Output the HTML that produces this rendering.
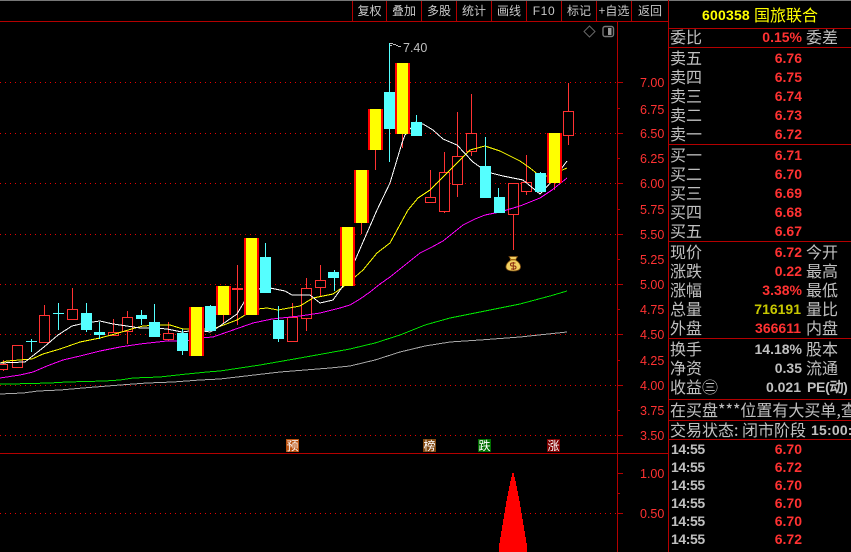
<!DOCTYPE html>
<html lang="zh"><head><meta charset="utf-8"><title>600358</title>
<style>
html,body{margin:0;padding:0;background:#000;width:851px;height:552px;overflow:hidden}
#a{position:relative;width:851px;height:552px;overflow:hidden;background:#000}
svg{position:absolute;left:0;top:0}
.c,.n,.r,.y,.ax,.tb,.bd{position:absolute;white-space:pre;line-height:16px;height:16px}
.c{font:16px/16px "WenQuanYi Zen Hei","Noto Sans CJK SC",sans-serif;color:#c0c0c0;transform:translateY(-1px)}
.n{font:bold 14px/16px "Liberation Sans",sans-serif;color:#ff3232;text-align:right;right:49px}
.g{color:#c0c0c0}
.tm{font:bold 14px/16px "Liberation Sans",sans-serif;color:#c0c0c0;left:671px;position:absolute;letter-spacing:-.4px}
.ax{font:12.5px/16px "Liberation Sans",sans-serif;color:#ff3232;left:640px}
.tb{font:12px/16px "WenQuanYi Zen Hei","Noto Sans CJK SC",sans-serif;color:#c8c8c8;top:3px;text-align:center}
.bd{font:12px/13px "WenQuanYi Zen Hei","Noto Sans CJK SC",sans-serif;color:#fff;width:13px;height:13px;line-height:13px;top:439px;text-align:center}
</style></head><body><div id="a">
<svg width="851" height="552" viewBox="0 0 851 552" shape-rendering="crispEdges">
<rect x="0" y="0" width="851" height="1" fill="#777"/>
<g stroke="#e80000" stroke-dasharray="1 4" fill="none">
<path d="M0 82.5H617M0 133.5H617M0 183.5H617M0 234.5H617M0 284.5H617M0 334.5H617M0 385.5H617M0 435.5H617M0 513.5H617"/>
</g>
<g stroke="#b40000" fill="none">
<path d="M0 21.5H668M0 453.5H668M617.5 21V552M668.5 0V552M352.5 1V21M386.5 1V21M421.5 1V21M456.5 1V21M491.5 1V21M526.5 1V21M561.5 1V21M596.5 1V21M631.5 1V21"/>
<path d="M668 28.5H851M668 47.5H851M668 144.5H851M668 241.5H851M668 338.5H851M668 399.5H851M668 420.5H851M668 439.5H851"/>
<path d="M617 82.5H623M617 108.5H620M617 133.5H623M617 158.5H620M617 183.5H623M617 209.5H620M617 234.5H623M617 259.5H620M617 284.5H623M617 309.5H620M617 334.5H623M617 360.5H620M617 385.5H623M617 410.5H620M617 435.5H623M617 473.5H623M617 493.5H620M617 513.5H623"/>
</g>
<!-- hollow red candles -->
<g stroke="#ff3232" fill="#000">
<path d="M3.5 360V371M17.5 345V367M44.5 305V342M72.5 288V319M113.5 319V336M127.5 311V344M168.5 322V341M237.5 265V325M292.5 303V342M306.5 278V331M320.5 265V297M223.5 315V323M361.5 223V234M375.5 150V170M402.5 134V148M430.5 170V197M444.5 152V213M457.5 112V197M471.5 94V156M513.5 214V250M526.5 155V195M554.5 183V190M568.5 83V145" fill="none"/>
<rect x="-1.5" y="364.5" width="9" height="5"/>
<rect x="12.5" y="345.5" width="10" height="22"/>
<rect x="39.5" y="315.5" width="10" height="27"/>
<rect x="67.5" y="309.5" width="10" height="10"/>
<rect x="108.5" y="332.5" width="10" height="3"/>
<rect x="122.5" y="317.5" width="10" height="14"/>
<rect x="163.5" y="333.5" width="10" height="6"/>
<rect x="287.5" y="317.5" width="10" height="24"/>
<rect x="301.5" y="288.5" width="10" height="30"/>
<rect x="315.5" y="280.5" width="10" height="7"/>
<rect x="425.5" y="197.5" width="10" height="5"/>
<rect x="439.5" y="172.5" width="10" height="39"/>
<rect x="452.5" y="156.5" width="10" height="28"/>
<rect x="466.5" y="133.5" width="10" height="18"/>
<rect x="508.5" y="183.5" width="10" height="31"/>
<rect x="521.5" y="182.5" width="10" height="9"/>
<rect x="563.5" y="111.5" width="10" height="24"/>
</g>
<rect x="232" y="288" width="11" height="2" fill="#ff3232"/>
<!-- moving averages -->
<g fill="none" stroke-width="1">
<polyline stroke="#a8a8a8" points="0,394 23,393 38,391 60,390 83,388 120,385 147,383 173,382 200,380 220,379 280,372 330,368 350,366 375,360 400,352 425,346 450,342 480,340 520,337 567,332"/>
<polyline stroke="#00e000" points="0,384 10,384 50,383 67,382 105,381 120,380 133,378 160,377 187,374 207,372 220,371 260,365 300,358 350,349 375,343 400,335 425,325 450,318 480,312 500,308 520,304 550,296 567,291"/>
<polyline stroke="#ff00ff" points="0,378 20,375 33,372 47,366 63,360 80,356 100,351 120,347 140,344 167,341 187,341 200,338 213,337 233,330 253,323 272,319 300,316 320,313 340,308 350,305 360,299 370,292 380,284 390,277 405,265 420,253 432,247 443,241 453,233 463,225 475,219 485,215 500,212 520,206 540,198 552,190 567,178"/>
<polyline stroke="#ffff00" points="0,363 7,361 32,359 43,354 60,349 80,342 100,338 115,334 135,328 143,326 160,325 170,325 183,329 213,329 237,320 245,315 258,309 267,308 278,310 300,306 313,298 333,294 343,287 355,277 363,270 377,253 390,243 408,210 418,198 430,190 440,180 453,167 470,150 485,146 500,151 520,161 530,168 540,176 550,176 560,171 567,168"/>
<polyline stroke="#ffffff" points="0,363 25,362 30,358 44,347 58,335 72,326 85,323 100,321 113,324 127,326 140,328 155,328 167,329 182,332 197,330 210,332 217,328 237,314 250,292 265,287 285,291 292,295 310,295 320,303 333,300 343,286 353,265 377,210 390,183 402,143 405,135 416,122 423,124 433,130 443,139 457,145 473,162 487,172 503,176 523,180 540,194 553,180 567,161"/>
</g>
<!-- cyan candles -->
<g stroke="#55ffff" fill="none">
<path d="M31.5 339V352M58.5 303V330M86.5 303V332M99.5 322V339M141.5 310V325M154.5 304V337M182.5 329V355M210.5 305V331M265.5 243V293M278.5 306V342M334.5 270V291M389.5 43V162M416.5 115V136M485.5 137V198M498.5 188V213M540.5 172V192"/>
</g>
<g fill="#55ffff">
<rect x="26" y="341" width="11" height="1"/>
<rect x="53" y="313" width="11" height="1"/>
<rect x="81" y="313" width="11" height="17"/>
<rect x="94" y="332" width="11" height="3"/>
<rect x="136" y="315" width="11" height="4"/>
<rect x="149" y="322" width="11" height="15"/>
<rect x="177" y="333" width="11" height="18"/>
<rect x="205" y="306" width="11" height="25"/>
<rect x="260" y="257" width="11" height="36"/>
<rect x="273" y="320" width="11" height="19"/>
<rect x="328" y="272" width="11" height="6"/>
<rect x="384" y="92" width="11" height="37"/>
<rect x="411" y="122" width="11" height="14"/>
<rect x="480" y="166" width="11" height="32"/>
<rect x="494" y="197" width="11" height="16"/>
<rect x="535" y="173" width="11" height="19"/>
</g>
<!-- yellow limit-up candles -->
<g fill="#ff0000">
<rect x="189" y="307" width="15" height="49"/>
<rect x="216" y="286" width="15" height="29"/>
<rect x="244" y="238" width="15" height="77"/>
<rect x="340" y="227" width="15" height="59"/>
<rect x="354" y="170" width="15" height="53"/>
<rect x="368" y="109" width="15" height="41"/>
<rect x="395" y="63" width="15" height="71"/>
<rect x="547" y="133" width="15" height="50"/>
</g>
<g fill="#ffff00">
<rect x="191" y="307" width="11" height="49"/>
<rect x="218" y="286" width="11" height="29"/>
<rect x="246" y="238" width="11" height="77"/>
<rect x="342" y="227" width="11" height="59"/>
<rect x="356" y="170" width="11" height="53"/>
<rect x="370" y="109" width="11" height="41"/>
<rect x="397" y="63" width="11" height="71"/>
<rect x="549" y="133" width="11" height="50"/>
</g>
<!-- flag -->
<g stroke="#c0c0c0" fill="none"><path d="M390 43.5H393M390 45.5H392M393 44.5H396M396 45.5H398M398 46.5H401"/></g>
<!-- toolbar icons -->
<g shape-rendering="auto">
<path d="M589.5 26L595 31.5L589.5 37L584 31.5Z" fill="none" stroke="#666"/>
<rect x="603" y="26.5" width="10.5" height="10" rx="2" fill="#000" stroke="#777" stroke-width="1.4"/>
<rect x="608" y="28" width="3.5" height="7" fill="#999"/>
<!-- money bag -->
<path d="M509 256.5H517.5L515.5 260C519 262 521 265 520.5 267.5C520 270 517 271 513 271C509 271 506.5 270 506 267.5C505.5 265 507.5 262 511 260Z" fill="#f2d060" stroke="#7a4a10" stroke-width=".8"/>
<rect x="510" y="259" width="6" height="1.4" fill="#a06a10"/>
<path d="M515.5 263H512A1.5 1.5 0 0 0 512 266H514.500A1.500 1.500 0 0 1 514.500 269H511M513.300 262V270" fill="none" stroke="#8a2a10" stroke-width="1"/>
</g>
<!-- volume spike -->
<path d="M513 473H514V477H515V481H516V486H517V491H518V496H519V501H520V507H521V513H522V519H523V525H524V531H525V537H526V543H527V552H499V543H500V537H501V531H502V525H503V519H504V513H505V507H506V501H507V496H508V491H509V486H510V481H511V477H512V473Z" fill="#ff0000"/>
</svg>

<div class="tb" style="left:353px;width:33px">复权</div>
<div class="tb" style="left:387px;width:34px">叠加</div>
<div class="tb" style="left:422px;width:34px">多股</div>
<div class="tb" style="left:457px;width:34px">统计</div>
<div class="tb" style="left:492px;width:34px">画线</div>
<div class="tb" style="left:527px;width:34px;font-family:'Liberation Sans',sans-serif;letter-spacing:.6px">F10</div>
<div class="tb" style="left:562px;width:34px">标记</div>
<div class="tb" style="left:597px;width:34px">+自选</div>
<div class="tb" style="left:632px;width:36px">返回</div>

<div class="ax" style="left:403px;top:40px;color:#c0c0c0">7.40</div>
<div class="ax" style="top:75px">7.00</div>
<div class="ax" style="top:102px">6.75</div>
<div class="ax" style="top:126px">6.50</div>
<div class="ax" style="top:151px">6.25</div>
<div class="ax" style="top:176px">6.00</div>
<div class="ax" style="top:202px">5.75</div>
<div class="ax" style="top:227px">5.50</div>
<div class="ax" style="top:252px">5.25</div>
<div class="ax" style="top:277px">5.00</div>
<div class="ax" style="top:302px">4.75</div>
<div class="ax" style="top:327px">4.50</div>
<div class="ax" style="top:353px">4.25</div>
<div class="ax" style="top:378px">4.00</div>
<div class="ax" style="top:403px">3.75</div>
<div class="ax" style="top:428px">3.50</div>
<div class="ax" style="top:466px">1.00</div>
<div class="ax" style="top:506px">0.50</div>

<div class="bd" style="left:286px;background:#b8500f">预</div>
<div class="bd" style="left:423px;background:#804810">榜</div>
<div class="bd" style="left:478px;background:#006e00">跌</div>
<div class="bd" style="left:547px;background:#7e0000">涨</div>

<div class="n" style="left:702px;right:auto;top:7px;color:#ffff00;letter-spacing:.2px">600358</div>
<div class="c" style="left:754px;top:7px;color:#ffff00">国旅联合</div>

<div class="c" style="left:670px;top:29px">委比</div><div class="n" style="top:29px">0.15%</div><div class="c" style="left:806px;top:29px">委差</div>

<div class="c" style="left:670px;top:50px">卖五</div><div class="n" style="top:50px">6.76</div>
<div class="c" style="left:670px;top:69px">卖四</div><div class="n" style="top:69px">6.75</div>
<div class="c" style="left:670px;top:88px">卖三</div><div class="n" style="top:88px">6.74</div>
<div class="c" style="left:670px;top:107px">卖二</div><div class="n" style="top:107px">6.73</div>
<div class="c" style="left:670px;top:126px">卖一</div><div class="n" style="top:126px">6.72</div>

<div class="c" style="left:670px;top:147px">买一</div><div class="n" style="top:147px">6.71</div>
<div class="c" style="left:670px;top:166px">买二</div><div class="n" style="top:166px">6.70</div>
<div class="c" style="left:670px;top:185px">买三</div><div class="n" style="top:185px">6.69</div>
<div class="c" style="left:670px;top:204px">买四</div><div class="n" style="top:204px">6.68</div>
<div class="c" style="left:670px;top:223px">买五</div><div class="n" style="top:223px">6.67</div>

<div class="c" style="left:670px;top:244px">现价</div><div class="n" style="top:244px">6.72</div><div class="c" style="left:806px;top:244px">今开</div>
<div class="c" style="left:670px;top:263px">涨跌</div><div class="n" style="top:263px">0.22</div><div class="c" style="left:806px;top:263px">最高</div>
<div class="c" style="left:670px;top:282px">涨幅</div><div class="n" style="top:282px">3.38%</div><div class="c" style="left:806px;top:282px">最低</div>
<div class="c" style="left:670px;top:301px">总量</div><div class="n" style="top:301px;color:#c8c800;right:50px">716191</div><div class="c" style="left:806px;top:301px">量比</div>
<div class="c" style="left:670px;top:320px">外盘</div><div class="n" style="top:320px;right:50px">366611</div><div class="c" style="left:806px;top:320px">内盘</div>

<div class="c" style="left:670px;top:341px">换手</div><div class="n g" style="top:341px">14.18%</div><div class="c" style="left:806px;top:341px">股本</div>
<div class="c" style="left:670px;top:360px">净资</div><div class="n g" style="top:360px">0.35</div><div class="c" style="left:806px;top:360px">流通</div>
<div class="c" style="left:670px;top:379px">收益㊂</div><div class="n g" style="top:379px;right:50px">0.021</div><div class="c" style="left:807px;top:380px;font-size:14px;font-family:'Liberation Sans','WenQuanYi Zen Hei',sans-serif;font-weight:bold;letter-spacing:-.3px">PE(动)</div>

<div class="c" style="left:670px;top:402px">在买盘***位置有大买单,查</div>
<div class="c" style="left:670px;top:422px">交易状态: 闭市阶段</div>
<div class="tm" style="left:811px;top:422px;letter-spacing:.2px">15:00:</div>

<div class="tm" style="top:441px;height:16px">14:55</div><div class="n" style="top:441px">6.70</div>
<div class="tm" style="top:459px;height:16px">14:55</div><div class="n" style="top:459px">6.72</div>
<div class="tm" style="top:477px;height:16px">14:55</div><div class="n" style="top:477px">6.70</div>
<div class="tm" style="top:495px;height:16px">14:55</div><div class="n" style="top:495px">6.70</div>
<div class="tm" style="top:513px;height:16px">14:55</div><div class="n" style="top:513px">6.70</div>
<div class="tm" style="top:531px;height:16px">14:55</div><div class="n" style="top:531px">6.72</div>
</div></body></html>
